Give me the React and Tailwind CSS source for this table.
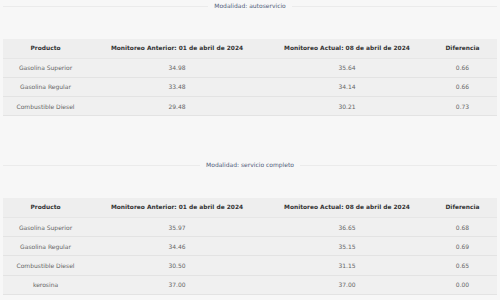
import React from 'react';

const secciones = [
  {
    modalidad: 'autoservicio',
    filas: [
      ['Gasolina Superior', '34.98', '35.64', '0.66'],
      ['Gasolina Regular', '33.48', '34.14', '0.66'],
      ['Combustible Diesel', '29.48', '30.21', '0.73'],
    ],
  },
  {
    modalidad: 'servicio completo',
    filas: [
      ['Gasolina Superior', '35.97', '36.65', '0.68'],
      ['Gasolina Regular', '34.46', '35.15', '0.69'],
      ['Combustible Diesel', '30.50', '31.15', '0.65'],
      ['kerosina', '37.00', '37.00', '0.00'],
    ],
  },
];

// Tabla de precios por modalidad
const Tabla = ({ modalidad, filas }) => (
  <div>
    <div className="flex items-center h-[10px]">
      <div className="flex-1 h-px bg-[#ebebeb]" />
      <span className="px-[6px] text-[6px] text-[#51607a] leading-none">Modalidad: {modalidad}</span>
      <div className="flex-1 h-px bg-[#ebebeb]" />
    </div>
    <table className="mt-[28px] w-full border-collapse table-fixed text-center">
      <colgroup>
        <col className="w-[85px]" />
        <col className="w-[178px]" />
        <col className="w-[162px]" />
        <col />
      </colgroup>
      <thead>
        <tr className="h-[19px] bg-[#eeeeee] border-b border-[#e6e6e6]">
          <th className="font-bold text-[5.9px] text-[#333]">Producto</th>
          <th className="font-bold text-[5.9px] text-[#333]">Monitoreo Anterior: 01 de abril de 2024</th>
          <th className="font-bold text-[5.9px] text-[#333]">Monitoreo Actual: 08 de abril de 2024</th>
          <th className="font-bold text-[5.9px] text-[#333]">Diferencia</th>
        </tr>
      </thead>
      <tbody>
        {filas.map((f, i) => (
          <tr key={i} className="h-[19.3px] bg-[#f0f0f0] border-b border-[#e3e3e3]">
            {f.map((c, j) => (
              <td key={j} className="text-[6px] text-[#666666]">{c}</td>
            ))}
          </tr>
        ))}
      </tbody>
    </table>
  </div>
);

export default function App() {
  return (
    <div className="w-[500px] h-[300px] overflow-hidden bg-[#f7f7f7] px-[3px] pt-[1px] font-['DejaVu_Sans',sans-serif]">
      <div className="flex flex-col gap-[44px]">
        {secciones.map((s) => (
          <Tabla key={s.modalidad} {...s} />
        ))}
      </div>
    </div>
  );
}
